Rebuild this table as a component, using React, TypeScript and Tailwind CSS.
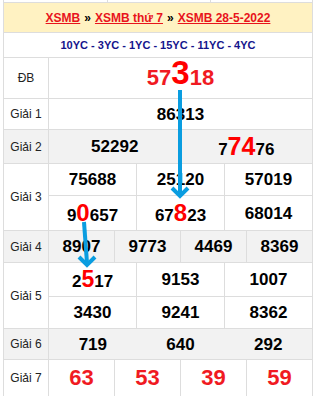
import React from "react";

const B = "border-[#dddddd]";

function Num({ children, className = "" }: { children: React.ReactNode; className?: string }) {
  return (
    <span className={`font-bold text-[17px] leading-none text-black ${className}`}>{children}</span>
  );
}

function Big({ children, size }: { children: React.ReactNode; size: string }) {
  return <span className={`font-bold leading-none text-[#ff0000] ${size}`}>{children}</span>;
}

function Cell({ children, last = false, line = true }: { children: React.ReactNode; last?: boolean; line?: boolean }) {
  return (
    <div
      className={`flex-1 flex items-center justify-center ${!last && line ? `border-r ${B}` : ""}`}
    >
      {children}
    </div>
  );
}

function Label({ children }: { children: React.ReactNode }) {
  return (
    <div className={`w-[45px] shrink-0 border-r ${B} flex items-center justify-center text-[12px] text-[#222]`}>
      {children}
    </div>
  );
}

export default function App() {
  return (
    <div
      className="relative w-[315px] h-[396px] overflow-hidden bg-white"
      style={{ fontFamily: '"Liberation Sans", Arial, sans-serif' }}
    >
      <div className={`ml-[3px] w-[310px] border-l border-r ${B}`}>
        {/* top strip */}
        <div className={`flex h-[3px] border-b ${B}`}>
          <div className={`w-[104px] border-r ${B}`} />
          <div className={`w-[103px] border-r ${B}`} />
          <div className="flex-1" />
        </div>
        {/* header */}
        <div className={`h-[30px] border-b ${B} bg-[#fff2c2] flex items-center justify-center text-[12px] font-bold`}>
          <span className="text-[#e8141c] underline">XSMB</span>
          <span className="text-black mx-[4px]">»</span>
          <span className="text-[#e8141c] underline">XSMB thứ 7</span>
          <span className="text-black mx-[4px]">»</span>
          <span className="text-[#e8141c] underline">XSMB 28-5-2022</span>
        </div>
        {/* sub header */}
        <div className={`h-[25px] border-b ${B} flex items-center justify-center text-[11px] font-bold text-[#14148c]`}>
          10YC - 3YC - 1YC - 15YC - 11YC - 4YC
        </div>
        {/* DB */}
        <div className={`flex h-[41px] border-b ${B}`}>
          <Label>ĐB</Label>
          <div className="flex-1 flex items-end justify-center pb-[9px] font-bold leading-none text-[#f01a22]">
            <span className="text-[22px]">57</span>
            <span className="text-[33px] text-[#ff0000]">3</span>
            <span className="text-[22px]">18</span>
          </div>
        </div>
        {/* G1 */}
        <div className={`flex h-[31px] border-b ${B}`}>
          <Label>Giải 1</Label>
          <Cell last>
            <Num>86313</Num>
          </Cell>
        </div>
        {/* G2 */}
        <div className={`flex h-[34px] border-b ${B} bg-[#f2f2f2]`}>
          <Label>Giải 2</Label>
          <Cell line={false}>
            <Num>52292</Num>
          </Cell>
          <Cell last>
            <Num>
              7<Big size="text-[25px]">74</Big>76
            </Num>
          </Cell>
        </div>
        {/* G3 */}
        <div className={`flex h-[67px] border-b ${B}`}>
          <Label>Giải 3</Label>
          <div className="flex-1 flex flex-col">
            <div className={`flex h-[32px] border-b ${B}`}>
              <Cell><Num>75688</Num></Cell>
              <Cell><Num>25120</Num></Cell>
              <Cell last><Num>57019</Num></Cell>
            </div>
            <div className="flex flex-1">
              <Cell>
                <Num>
                  9<Big size="text-[24px]">0</Big>657
                </Num>
              </Cell>
              <Cell>
                <Num>
                  67<Big size="text-[24px]">8</Big>23
                </Num>
              </Cell>
              <Cell last><Num>68014</Num></Cell>
            </div>
          </div>
        </div>
        {/* G4 */}
        <div className={`flex h-[32px] border-b ${B} bg-[#f2f2f2]`}>
          <Label>Giải 4</Label>
          <Cell><Num>8907</Num></Cell>
          <Cell><Num>9773</Num></Cell>
          <Cell><Num>4469</Num></Cell>
          <Cell last><Num>8369</Num></Cell>
        </div>
        {/* G5 */}
        <div className={`flex h-[66px] border-b ${B}`}>
          <Label>Giải 5</Label>
          <div className="flex-1 flex flex-col">
            <div className={`flex h-[34px] border-b ${B}`}>
              <Cell>
                <Num>
                  2<Big size="text-[23px]">5</Big>17
                </Num>
              </Cell>
              <Cell><Num>9153</Num></Cell>
              <Cell last><Num>1007</Num></Cell>
            </div>
            <div className="flex flex-1">
              <Cell><Num>3430</Num></Cell>
              <Cell><Num>9241</Num></Cell>
              <Cell last><Num>8362</Num></Cell>
            </div>
          </div>
        </div>
        {/* G6 */}
        <div className={`flex h-[31px] border-b ${B} bg-[#f2f2f2]`}>
          <Label>Giải 6</Label>
          <Cell line={false}><Num>719</Num></Cell>
          <Cell line={false}><Num>640</Num></Cell>
          <Cell last><Num>292</Num></Cell>
        </div>
        {/* G7 */}
        <div className={`flex h-[37px] border-b ${B}`}>
          <Label>Giải 7</Label>
          {["63", "53", "39", "59"].map((n, i) => (
            <Cell key={n} last={i === 3}>
              <span className="font-bold text-[22px] leading-none text-[#f01a22]">{n}</span>
            </Cell>
          ))}
        </div>
      </div>

      <svg
        className="absolute left-0 top-0 pointer-events-none"
        width="315"
        height="396"
        viewBox="0 0 315 396"
      >
        <g stroke="#0a9de0" strokeWidth="4" fill="none" strokeLinejoin="miter">
          <path d="M180 90 V195" />
          <path d="M172 188 L180 196 L188 188" />
          <path d="M84 222 L87 263" />
          <path d="M79 257 L87 265 L95 257" />
        </g>
      </svg>
    </div>
  );
}
